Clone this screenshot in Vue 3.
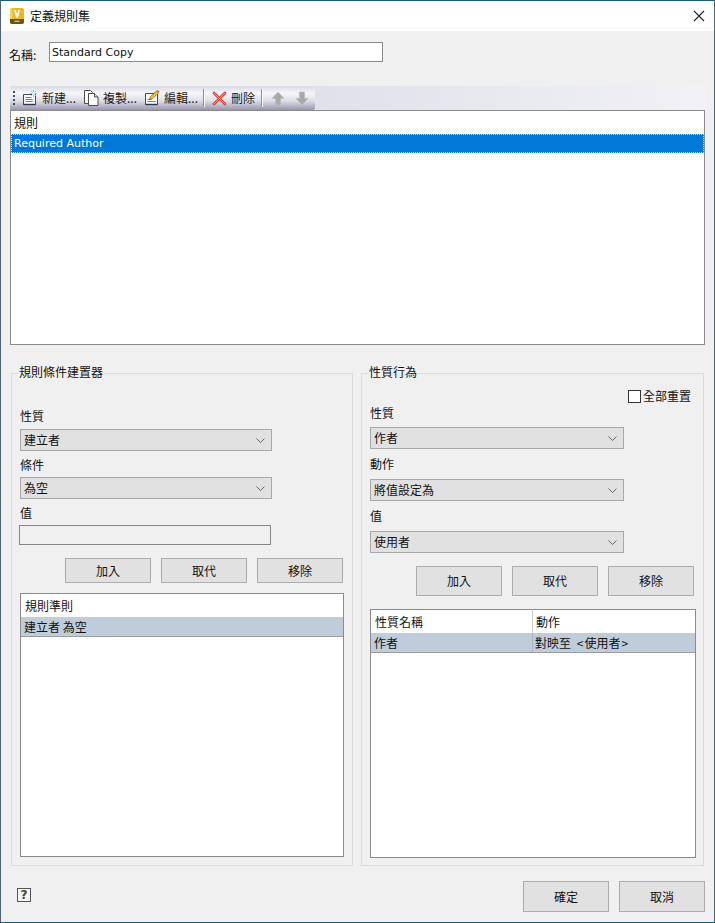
<script setup>
const tools = [
  { key: 'new', label: '新建...' },
  { key: 'copy', label: '複製...' },
  { key: 'edit', label: '編輯...' }
]
const leftButtons = ['加入', '取代', '移除']
</script>

<template>
  <div class="window">
    <header class="titlebar">
      <svg class="app-icon" viewBox="0 0 14 16" width="14" height="16">
        <rect x="0" y="0" width="14" height="16" rx="2" fill="#e9b824" />
        <rect x="0" y="0" width="2.5" height="11" rx="1" fill="#f5d35c" />
        <path d="M0 11h14v3a2 2 0 0 1-2 2H2a2 2 0 0 1-2-2z" fill="#6b5516" />
        <path d="M4 2h1.9L7 7l1.1-5H10L8 9.5H6z" fill="#fff" />
        <rect x="4.5" y="12.6" width="5" height="1.4" fill="#cdbb7d" />
      </svg>
      <span class="title">定義規則集</span>
      <svg class="close" viewBox="0 0 12 12" width="12" height="12">
        <path d="M1 1l10 10M11 1L1 11" stroke="#222" stroke-width="1.1" fill="none" />
      </svg>
    </header>

    <main class="body">
      <div class="name-row">
        <label class="name-label">名稱:</label>
        <div class="name-input">Standard Copy</div>
      </div>

      <div class="toolstrip">
        <div class="toolbar">
          <span class="grip"><i></i><i></i><i></i><i></i></span>
          <span v-for="t in tools" :key="t.key" class="tool" :class="'tool-' + t.key">
            <svg v-if="t.key === 'new'" viewBox="0 0 16 16" width="16" height="16">
              <path d="M1.5 4.5h12v10h-12z" fill="#f7f9fc" stroke="#3f4a60" />
              <path d="M1.5 14.5h12" stroke="#2d3548" stroke-width="1.4" />
              <path d="M3.5 7.5h6M3.5 9.5h7M3.5 11.5h7" stroke="#6e7d98" />
              <path d="M11.5 0v7M8 3.5h7M9 1l5 5M14 1L9 6" stroke="#6ec0ee" stroke-width=".9" />
              <circle cx="11.5" cy="3.5" r="1.4" fill="#fff" />
            </svg>
            <svg v-else-if="t.key === 'copy'" viewBox="0 0 16 16" width="16" height="16">
              <path d="M1.5 .5h6l2 2v11h-8z" fill="#fff" stroke="#4a4a4a" />
              <path d="M5.5 3.5h6l3.5 3.5v8.5H5.5z" fill="#fff" stroke="#4a4a4a" />
              <path d="M11.5 3.5V7H15" fill="#e2e2e2" stroke="#4a4a4a" />
            </svg>
            <svg v-else viewBox="0 0 16 16" width="16" height="16">
              <path d="M1.5 3.5h12v11h-12z" fill="#f7f9fc" stroke="#3f4a60" />
              <path d="M1.5 14.5h12" stroke="#2d3548" stroke-width="1.4" />
              <path d="M3.5 9.5h4M3.5 11.5h8" stroke="#6e7d98" />
              <path d="M5.5 9.5l1-3 6-5.5 2 2-6 5.5z" fill="#f2c230" stroke="#7d5f10" stroke-width=".7" />
              <path d="M12.6.8l2 2 .9-1-1.9-1.8z" fill="#d9503f" />
            </svg>
            <span>{{ t.label }}</span>
          </span>
          <span class="sep sep-a"></span>
          <span class="tool tool-del">
            <svg viewBox="0 0 15 15" width="15" height="15">
              <path d="M2 2l11 11M13 2L2 13" stroke="#d8433a" stroke-width="2.8" stroke-linecap="round" fill="none" />
              <path d="M2 2l11 11M13 2L2 13" stroke="#f5b0a8" stroke-width=".8" stroke-linecap="round" fill="none" />
            </svg>
            <span>刪除</span>
          </span>
          <span class="sep sep-b"></span>
          <svg class="arrow" viewBox="0 0 14 15" width="14" height="15">
            <path d="M7 1l6 6.5H9.6V14H4.4V7.5H1z" fill="#a9a9a9" stroke="#bdbdbd" stroke-width=".6" />
          </svg>
          <svg class="arrow arrow-down" viewBox="0 0 14 15" width="14" height="15">
            <path d="M7 14L1 7.5h3.4V1h5.2v6.5H13z" fill="#a9a9a9" stroke="#bdbdbd" stroke-width=".6" />
          </svg>
        </div>
      </div>

      <section class="rule-list">
        <div class="rule-head">規則</div>
        <div class="rule-selected">Required Author</div>
      </section>

      <div class="groups">
        <section class="group group-left">
          <h3 class="legend">規則條件建置器</h3>
          <div class="label first-left">性質</div>
          <div class="select"><span>建立者</span><svg class="chev" viewBox="0 0 9 5" width="9" height="5"><path d="M.5.5L4.5 4.5 8.5.5" fill="none" stroke="#666" /></svg></div>
          <div class="label">條件</div>
          <div class="select"><span>為空</span><svg class="chev" viewBox="0 0 9 5" width="9" height="5"><path d="M.5.5L4.5 4.5 8.5.5" fill="none" stroke="#666" /></svg></div>
          <div class="label">值</div>
          <div class="text-box"></div>
          <div class="btn-row btn-row-left">
            <button v-for="b in leftButtons" :key="b" class="btn">{{ b }}</button>
          </div>
          <div class="table table-left">
            <div class="t-head t-head-left">規則準則</div>
            <div class="t-row">建立者 為空</div>
          </div>
        </section>

        <section class="group group-right">
          <h3 class="legend">性質行為</h3>
          <div class="reset-row">
            <span class="checkbox"></span>
            <span>全部重置</span>
          </div>
          <div class="label label-r0">性質</div>
          <div class="select select-r"><span>作者</span><svg class="chev" viewBox="0 0 9 5" width="9" height="5"><path d="M.5.5L4.5 4.5 8.5.5" fill="none" stroke="#666" /></svg></div>
          <div class="label label-r">動作</div>
          <div class="select select-r"><span>將值設定為</span><svg class="chev" viewBox="0 0 9 5" width="9" height="5"><path d="M.5.5L4.5 4.5 8.5.5" fill="none" stroke="#666" /></svg></div>
          <div class="label label-r">值</div>
          <div class="select select-r"><span>使用者</span><svg class="chev" viewBox="0 0 9 5" width="9" height="5"><path d="M.5.5L4.5 4.5 8.5.5" fill="none" stroke="#666" /></svg></div>
          <div class="btn-row btn-row-right">
            <button v-for="b in leftButtons" :key="b" class="btn btn-tall">{{ b }}</button>
          </div>
          <div class="table table-right">
            <div class="t-cols t-cols-head"><span class="c1">性質名稱</span><span class="c2">動作</span></div>
            <div class="t-cols t-cols-row"><span class="c1">作者</span><span class="c2 mapped">對映至 <span class="angle">&lt;</span>使用者<span class="angle">&gt;</span></span></div>
          </div>
        </section>
      </div>

      <footer class="footer">
        <span class="help">?</span>
        <div class="footer-btns">
          <button class="btn btn-footer">確定</button>
          <button class="btn btn-footer">取消</button>
        </div>
      </footer>
    </main>
  </div>
</template>

<style scoped>
.window {
  box-sizing: border-box;
  width: 715px;
  height: 923px;
  border: 1px solid #1b5b78;
  border-left-color: #4f6470;
  border-right-color: #4f6470;
  background: #f0f0f0;
  display: flex;
  flex-direction: column;
  font: 12px/16px "Noto Sans CJK TC", sans-serif;
  color: #111;
  overflow: hidden;
}
.titlebar {
  height: 30px;
  flex: none;
  background: #fff;
  display: flex;
  align-items: center;
  padding: 0 9px;
}
.app-icon { margin-right: 6px; }
.close { margin-left: auto; margin-right: 0; }
.body { flex: 1; display: flex; flex-direction: column; padding: 11px 9px 0; min-height: 0; }
.name-row { display: flex; align-items: center; height: 20px; }
.name-label { width: 40px; margin-left: -1px; padding-top: 5px; box-sizing: border-box; }
.name-input {
  box-sizing: border-box;
  width: 334px;
  height: 20px;
  background: #fff;
  border: 1px solid #8a8a8f;
  padding: 0 2px;
  font: 11px/19px "DejaVu Sans", sans-serif;
  white-space: nowrap;
}
.toolstrip {
  margin-top: 24px;
  height: 24px;
  background: linear-gradient(90deg, #e1e1ec 0%, #e1e1ec 45%, #f1f1f6 100%);
}
.toolbar {
  box-sizing: border-box;
  width: 305px;
  height: 24px;
  display: flex;
  align-items: center;
  padding-left: 3px;
  border-radius: 2px 2px 2px 0;
  background: linear-gradient(180deg, #dadae6 0%, #f6f6fa 30%, #dedee8 62%, #9896ae 100%);
  color: #1c1c1c;
}
.grip { display: flex; flex-direction: column; gap: 2px; width: 2px; }
.grip i { display: block; width: 2px; height: 2px; background: #4a4a5a; }
.tool { display: flex; align-items: center; gap: 4px; white-space: nowrap; }
.tool-new { margin-left: 7px; }
.tool-copy { margin-left: 7px; }
.tool-edit { margin-left: 7px; }
.sep { width: 1px; height: 18px; background: #fff; box-shadow: -1px 0 0 #8d8da3; }
.sep-a { margin-left: 6px; }
.tool-del { margin-left: 7px; }
.sep-b { margin-left: 7px; }
.arrow { margin-left: 8px; }
.arrow-down { margin-left: 10px; }

.rule-list {
  box-sizing: border-box;
  height: 235px;
  background: #fff;
  border: 1px solid #8a8a8f;
}
.rule-head { height: 23px; line-height: 23px; padding-left: 3px; }
.rule-selected {
  box-sizing: border-box;
  height: 19px;
  line-height: 18px;
  padding-left: 2px;
  background: #0078d7;
  color: #fff;
  font-family: "DejaVu Sans", sans-serif;
  font-size: 11px;
  border: 1px dotted #cfe4f6;
}

.groups { margin-top: 28px; height: 493px; display: flex; gap: 8px; padding: 0 1px; flex: none; }
.group { position: relative; box-sizing: border-box; height: 493px; border: 1px solid #dcdcdc; }
.group-left { width: 342px; padding-left: 8px; }
.group-right { width: 343px; padding-left: 8px; }
.legend {
  position: absolute;
  top: -11px;
  left: 6px;
  margin: 0;
  padding: 0 1px;
  background: #f0f0f0;
  font-size: 12px;
  line-height: 18px;
  font-weight: 400;
  white-space: nowrap;
}
.label { height: 16px; line-height: 16px; margin-top: 6px; margin-bottom: 4px; }
.first-left { margin-top: 34px; margin-bottom: 5px; }
.label-r0 { margin-top: 2px; margin-bottom: 6px; }
.label-r { margin-top: 7px; margin-bottom: 7px; }
.select {
  box-sizing: border-box;
  width: 252px;
  height: 22px;
  background: #e1e1e1;
  border: 1px solid #a8a8a8;
  display: flex;
  align-items: center;
  justify-content: space-between;
  padding: 0 4px 0 3px;
}
.select-r { width: 254px; }
.chev { margin-right: 2px; }
.text-box {
  box-sizing: border-box;
  width: 252px;
  height: 20px;
  margin-left: -1px;
  background: #f0f0f0;
  border: 1px solid #86868c;
}
.btn-row { display: flex; gap: 10px; }
.btn-row-left { margin-top: 13px; margin-left: 45px; }
.btn-row-right { margin-top: 13px; margin-left: 46px; }
.btn {
  box-sizing: border-box;
  width: 86px;
  height: 25px;
  padding: 0;
  background: #e1e1e1;
  border: 1px solid #adadad;
  font: 12px/16px "Noto Sans CJK TC", sans-serif;
  color: #111;
}
.btn-tall { height: 30px; }
.table {
  box-sizing: border-box;
  background: #fff;
  border: 1px solid #8a8a8f;
}
.table-left { width: 324px; height: 264px; margin-top: 10px; }
.table-right { width: 326px; height: 249px; margin-top: 13px; }
.t-head-left { height: 23px; line-height: 23px; padding-left: 4px; }
.t-row {
  box-sizing: border-box;
  height: 20px;
  line-height: 19px;
  padding-left: 3px;
  background: #bfcddb;
  border-bottom: 1px solid #9a9a9f;
}
.t-cols { display: flex; }
.t-cols-head { height: 23px; line-height: 23px; }
.t-cols-row {
  box-sizing: border-box;
  height: 20px;
  line-height: 19px;
  background: #bfcddb;
  border-bottom: 1px solid #9a9a9f;
}
.c1 { box-sizing: border-box; width: 162px; border-right: 1px solid #cfcfcf; padding-left: 4px; }
.t-cols-row .c1 { padding-left: 3px; border-right-color: #a9b6c4; }
.c2 { padding-left: 3px; }
.t-cols-row .c2 { padding-left: 2px; }
.mapped { word-spacing: 2px; }
.angle { margin: 0 1px; }
.reset-row {
  display: flex;
  justify-content: flex-end;
  align-items: center;
  gap: 2px;
  height: 14px;
  margin-top: 15px;
  padding-right: 12px;
}
.checkbox { box-sizing: border-box; width: 13px; height: 13px; background: #fff; border: 1px solid #333; }
.footer { display: flex; justify-content: space-between; align-items: flex-start; margin-top: 15px; padding-left: 7px; }
.help {
  box-sizing: border-box;
  width: 14px;
  height: 14px;
  margin-top: 7px;
  border: 1px solid #555;
  background: #f4f4f4;
  text-align: center;
  font: 700 12px/12px "DejaVu Sans", sans-serif;
  color: #444;
}
.footer-btns { display: flex; gap: 10px; }
.btn-footer { height: 31px; width: 86px; }
</style>

<style>
body { margin: 0; }
</style>
